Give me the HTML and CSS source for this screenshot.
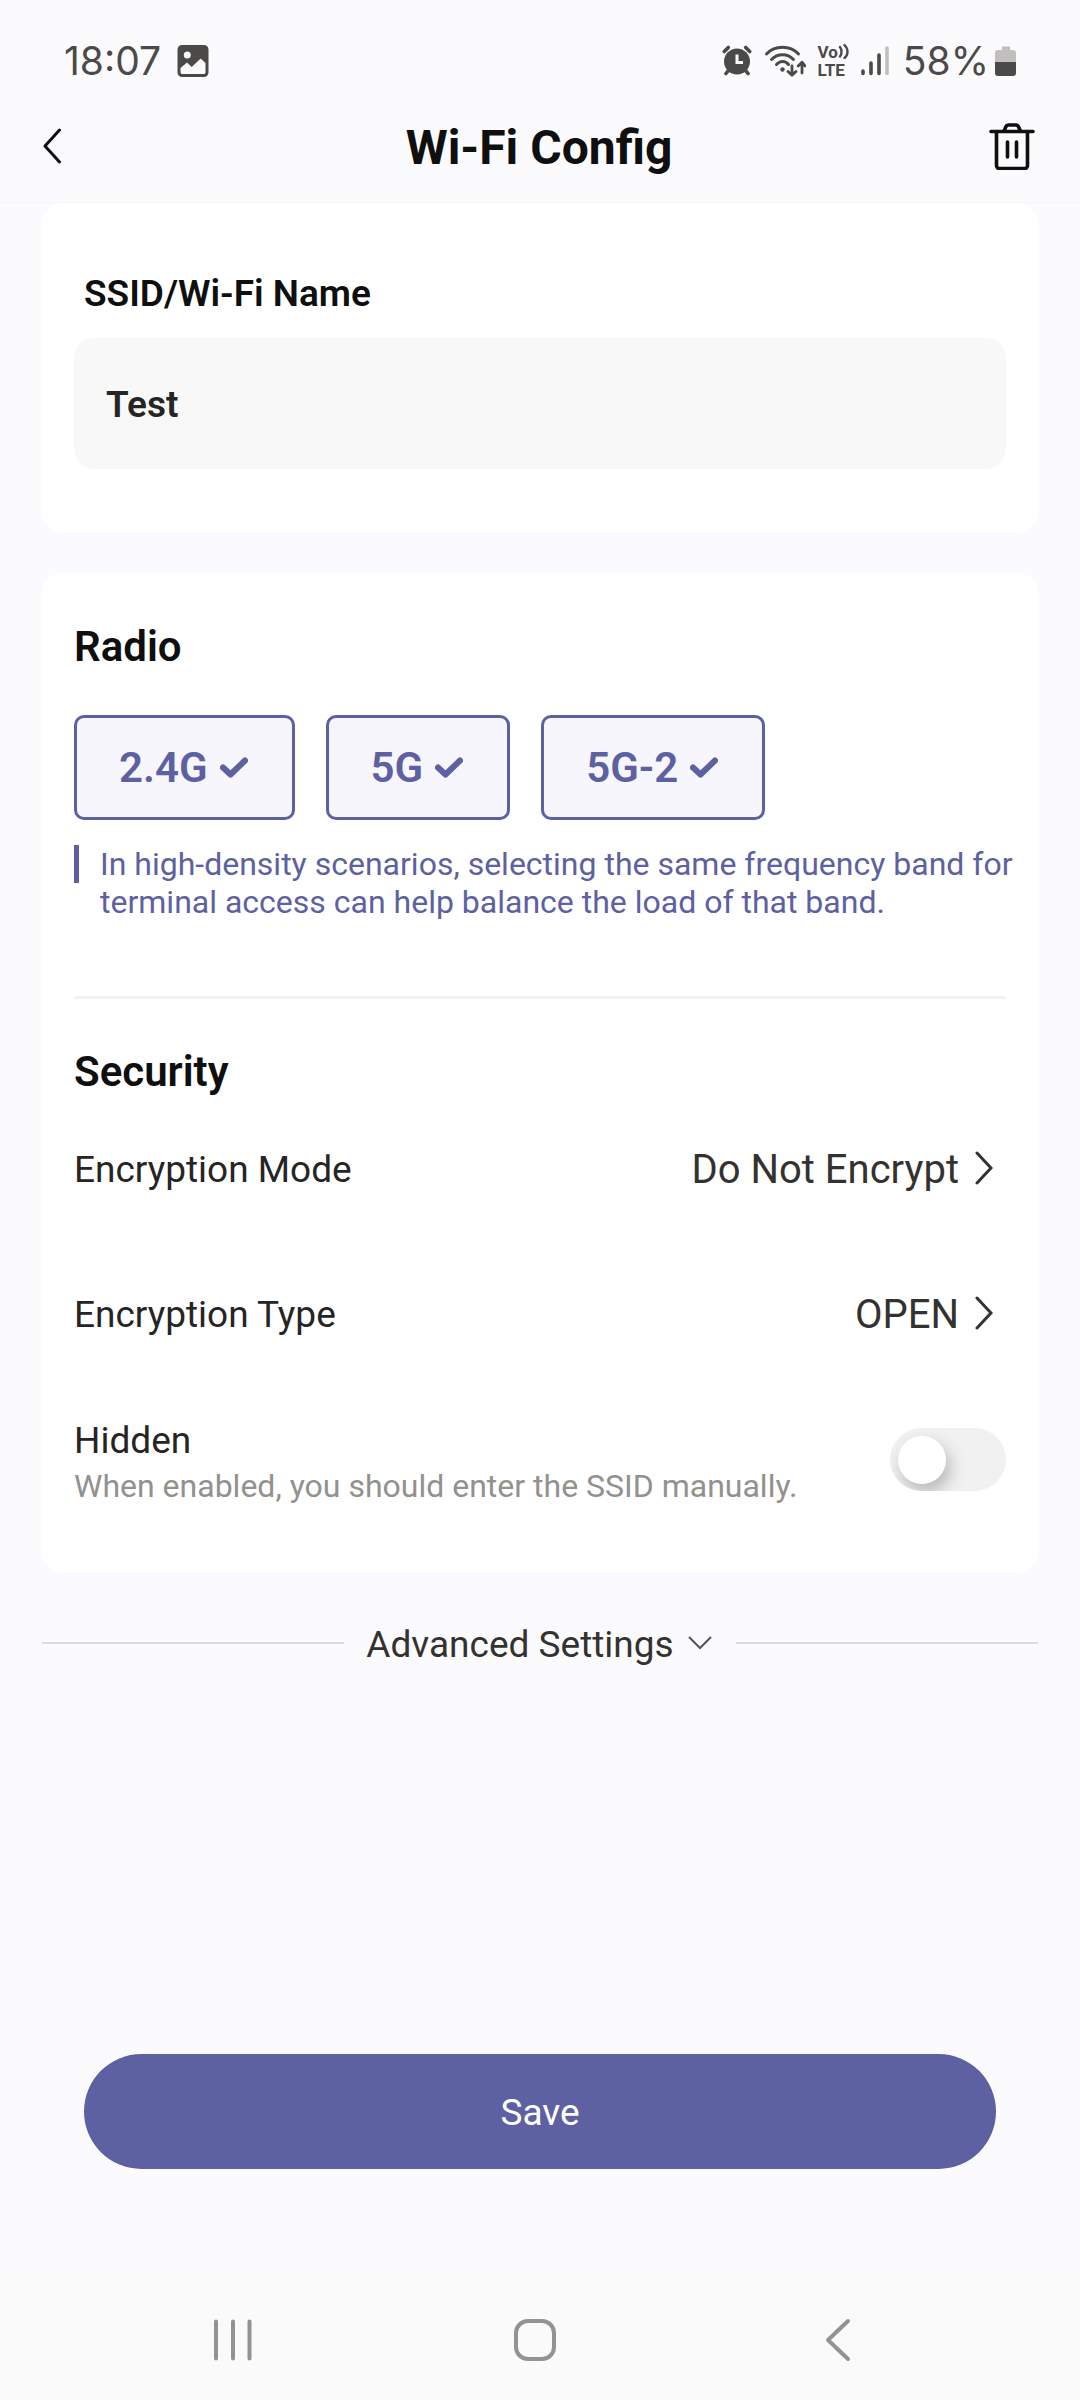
FILE: index.html
```
<!DOCTYPE html>
<html lang="en">
<head>
<meta charset="utf-8">
<meta name="viewport" content="width=device-width, initial-scale=1">
<title>Wi-Fi Config</title>
<link rel="stylesheet" href="styles.css">
</head>
<body>
<div class="screen">
  <div class="status">
    <div class="status-group">
      <span class="clock">18:07</span>
      <svg width="32" height="32" viewBox="0 0 32 32" aria-hidden="true">
        <path fill="#4b4a48" fill-rule="evenodd" d="M5 0h22a4.500 4.500 0 0 1 4.500 4.500v23a4.500 4.500 0 0 1-4.500 4.500H5A4.500 4.500 0 0 1 .5 27.500v-23A4.500 4.500 0 0 1 5 0zM10.300 6.500a3.500 3.500 0 1 0 0 7 3.500 3.500 0 0 0 0-7zM3.500 23v4c0 1.500.8 2 2 2h21c1.200 0 2-.5 2-2V18l-4.800-4.500-9 8.500-4.700-4.500z"/>
      </svg>
    </div>
    <div class="status-group status-right">
      <svg width="30" height="32" viewBox="0 0 30 32" aria-hidden="true">
        <g stroke="#4b4a48" stroke-width="3.600" stroke-linecap="round">
          <path d="M2.300 6.500l4-4M27.700 6.500l-4-4M4 28.500l4-5M26 28.500l-4-5"/>
        </g>
        <circle cx="15" cy="16.500" r="13" fill="#4b4a48"/>
        <path d="M15 9.500v8h6" fill="none" stroke="#fbfbfd" stroke-width="3"/>
      </svg>
      <svg width="42" height="34" viewBox="0 0 42 34" aria-hidden="true">
        <g fill="none" stroke="#4b4a48" stroke-width="3" stroke-linecap="round" stroke-linejoin="round">
          <path d="M2.500 10C11 1 26 1 34.500 10M7.500 15.500c6-6.500 16-6.500 22 0M12.500 20.500c3.500-4 9-4 12 0"/>
          <path stroke-width="2.800" d="M28 22v8.500M24 27.500l4 3.800 4-3.800M38 29V19M34.200 22l3.800-3.800L41 22"/>
        </g>
        <circle cx="18.500" cy="25.500" r="2.200" fill="#4b4a48"/>
      </svg>
      <div class="volte">
        <span class="volte-line">Vo<svg width="11" height="16" viewBox="0 0 11 16" aria-hidden="true"><path d="M2 4c2 2.500 2 7 0 9.500M6.500 2c4 4 4 9.500 0 13" fill="none" stroke="#4b4a48" stroke-width="2.400" stroke-linecap="round"/></svg></span>
        <span class="volte-line">LTE</span>
      </div>
      <svg width="28" height="30" viewBox="0 0 28 30" aria-hidden="true">
        <g stroke="#4b4a48" stroke-width="3.600" stroke-linecap="round">
          <path d="M2 25v2.500M10 17v10.500M18 9v18.500"/>
          <path stroke="#c1bfbe" d="M26 2v25.500"/>
        </g>
      </svg>
      <div class="battery">
        <span class="clock">58%</span>
        <svg width="21" height="32" viewBox="0 0 21 32" aria-hidden="true">
          <path fill="#c1bfbe" d="M7 1.500h8V5h3a3 3 0 0 1 3 3v10H0V8a3 3 0 0 1 3-3h4z"/>
          <path fill="#4b4a48" d="M0 17h21v11a3 3 0 0 1-3 3H3a3 3 0 0 1-3-3z"/>
        </svg>
      </div>
    </div>
  </div>

  <header class="header">
    <button class="icon-button" type="button" aria-label="Back">
      <svg width="20" height="36" viewBox="0 0 20 36"><path d="M17.500 2L3 18l14.500 16" fill="none" stroke="#0f0f0f" stroke-width="3" stroke-linecap="round" stroke-linejoin="round"/></svg>
    </button>
    <h1 class="title">Wi-Fi Config</h1>
    <button class="icon-button" type="button" aria-label="Delete">
      <svg width="46" height="48" viewBox="0 0 46 48"><g fill="none" stroke="#0f0f0f" stroke-width="3.600" stroke-linecap="round" stroke-linejoin="round"><path d="M2 9.500h42M7.500 9.500v34a3 3 0 0 0 3 3h25a3 3 0 0 0 3-3v-34M15 9l2-4.500a2.500 2.500 0 0 1 2.200-1.500h8a2.500 2.500 0 0 1 2.200 1.500l2 4.500M18.500 20v15M27.500 20v15"/></g></svg>
    </button>
  </header>

  <main class="content">
    <section class="card card-name">
      <label class="field-label" for="ssid">SSID/Wi-Fi Name</label>
      <input class="field" id="ssid" type="text" value="Test">
    </section>

    <section class="card card-settings">
      <h2 class="heading">Radio</h2>
      <div class="chips">
        <label class="chip"><input type="checkbox" checked>2.4G<svg width="28" height="22" viewBox="0 0 28 22" aria-hidden="true"><path d="M3 10.500l7.500 7L25 3.500"/></svg></label>
        <label class="chip"><input type="checkbox" checked>5G<svg width="28" height="22" viewBox="0 0 28 22" aria-hidden="true"><path d="M3 10.500l7.500 7L25 3.500"/></svg></label>
        <label class="chip"><input type="checkbox" checked>5G-2<svg width="28" height="22" viewBox="0 0 28 22" aria-hidden="true"><path d="M3 10.500l7.500 7L25 3.500"/></svg></label>
      </div>
      <div class="note">
        <span class="note-bar"></span>
        <p class="note-text">In high-density scenarios, selecting the same frequency band for terminal access can help balance the load of that band.</p>
      </div>
      <hr class="divider">
      <h2 class="heading">Security</h2>
      <div class="rows">
        <button class="row" type="button">
          <span>Encryption Mode</span>
          <span class="value">Do Not Encrypt<svg width="18" height="34" viewBox="0 0 18 34" aria-hidden="true"><path d="M2 2l14 15L2 32"/></svg></span>
        </button>
        <button class="row" type="button">
          <span>Encryption Type</span>
          <span class="value">OPEN<svg width="18" height="34" viewBox="0 0 18 34" aria-hidden="true"><path d="M2 2l14 15L2 32"/></svg></span>
        </button>
      </div>
      <div class="hidden-row">
        <label for="hidden-ssid">Hidden<small class="hint">When enabled, you should enter the SSID manually.</small></label>
        <input class="toggle" id="hidden-ssid" type="checkbox" role="switch">
      </div>
    </section>

    <button class="advanced" type="button">
      <span class="advanced-text">Advanced Settings</span>
      <svg width="24" height="14" viewBox="0 0 24 14" aria-hidden="true"><path d="M1 1l11 11L23 1" fill="none" stroke="#555" stroke-width="2"/></svg>
    </button>
  </main>

  <footer class="actions">
    <button class="save" type="button">Save</button>
  </footer>

  <nav class="navbar">
    <button class="icon-button" type="button" aria-label="Recent apps">
      <svg width="44" height="44" viewBox="0 0 44 44"><path d="M6 3.500v37M23 3.500v37M39.500 3.500v37"/></svg>
    </button>
    <button class="icon-button" type="button" aria-label="Home">
      <svg width="44" height="44" viewBox="0 0 44 44"><rect x="3" y="3" width="38" height="38" rx="12"/></svg>
    </button>
    <button class="icon-button" type="button" aria-label="Back">
      <svg width="44" height="44" viewBox="0 0 44 44"><path d="M32 3L12 22l20 19"/></svg>
    </button>
  </nav>
</div>
</body>
</html>
```
FILE: styles.css
```
* {
  box-sizing: border-box;
}

body {
  margin: 0;
  background: #fbfbfd;
  color: #262524;
  font-family: Roboto, "Liberation Sans", sans-serif;
  font-size: 37px;
  line-height: 44px;
}

button {
  padding: 0;
  border: 0;
  background: none;
  color: inherit;
  font: inherit;
  cursor: pointer;
}

svg {
  display: block;
  flex: none;
}

.screen {
  display: flex;
  flex-direction: column;
  min-height: 100vh;
}

/* System status bar */

.status {
  display: flex;
  justify-content: space-between;
  align-items: center;
  height: 98px;
  padding: 24px 64px 0;
  color: #4b4a48;
}

.status-group,
.battery {
  display: flex;
  align-items: center;
}

.status-group {
  gap: 16px;
}

.status-right {
  gap: 12px;
}

.battery {
  gap: 6px;
  margin-left: 2px;
}

.clock {
  font-family: Inter, Roboto, sans-serif;
  font-size: 39px;
  font-weight: 400;
}

.volte {
  font-size: 17px;
  font-weight: 700;
  line-height: 18px;
}

.volte-line {
  display: flex;
}

/* App header */

.header {
  display: flex;
  justify-content: space-between;
  align-items: center;
  height: 105px;
  padding: 0 44px 8px 42px;
  border-bottom: 1px solid #f5f5f7;
}

.icon-button {
  display: flex;
  align-items: center;
  justify-content: center;
}

.title {
  margin: 0;
  padding-top: 4px;
  color: #0f0f0f;
  font-size: 48px;
  font-weight: 700;
  line-height: 56px;
}

.header .icon-button {
  width: 48px;
}

.header .icon-button:first-child {
  justify-content: flex-start;
}

/* Cards */

.content {
  flex: 1;
  padding: 0 42px;
}

.card {
  padding: 49px 32px 63px;
  border-radius: 20px;
  background: #fff;
}

.card-name {
  padding-top: 69px;
}

.card-settings {
  margin-top: 41px;
}

.field-label {
  display: block;
  padding: 0 10px;
  color: #0f0f0f;
  font-weight: 600;
}

.field {
  display: block;
  width: 100%;
  height: 131px;
  margin-top: 22px;
  padding: 2px 32px 0;
  border: 0;
  border-radius: 20px;
  background: #f8f8f8;
  color: inherit;
  font: inherit;
  font-weight: 600;
}

.heading {
  margin: 0;
  color: #0f0f0f;
  font-size: 42px;
  font-weight: 600;
  line-height: 50px;
}

.chips {
  display: flex;
  gap: 31px;
  margin-top: 43px;
}

.chip {
  display: flex;
  align-items: center;
  gap: 12px;
  height: 105px;
  padding: 0 44px 0 42px;
  border: 3px solid #5d61a2;
  border-radius: 10px;
  background: #f6f6fc;
  color: #5d61a2;
  font-size: 42px;
  font-weight: 600;
  position: relative;
}

.chip input {
  position: absolute;
  inset: 0;
  margin: 0;
  opacity: 0;
}

.chip path {
  fill: none;
  stroke: currentColor;
  stroke-width: 6;
  stroke-linecap: round;
  stroke-linejoin: round;
}

.note {
  display: flex;
  gap: 21px;
  margin: 25px -16px 0 0;
  color: #5d61a2;
  font-size: 32px;
  line-height: 38px;
}

.note-bar {
  flex: none;
  width: 5px;
  height: 38px;
  background: #5d61a2;
}

.note-text {
  margin: 0;
}

.divider {
  height: 3px;
  margin: 75px 0 48px;
  border: 0;
  background: #f2f2f2;
}

.row,
.hidden-row {
  display: flex;
  justify-content: space-between;
  align-items: center;
  width: 100%;
  text-align: left;
}

.row {
  height: 145px;
}

.value {
  display: flex;
  align-items: center;
  gap: 16px;
  padding-right: 13px;
  color: #333231;
  font-size: 40px;
}

.value svg {
  margin-bottom: 4px;
}

.value path {
  fill: none;
  stroke: #333231;
  stroke-width: 3;
  stroke-linecap: round;
}

.hidden-row {
  align-items: flex-start;
  margin-top: 32px;
}

.hint {
  display: block;
  color: #92918e;
  font-size: 32px;
  line-height: 46px;
}

.toggle {
  display: flex;
  align-items: center;
  width: 116px;
  height: 63px;
  margin: 9px 0 0;
  padding: 0 8px;
  border-radius: 32px;
  background: #f1f1f1;
  appearance: none;
  overflow: hidden;
}

.toggle::before {
  content: "";
  width: 48px;
  height: 48px;
  border-radius: 50%;
  background: #fff;
  box-shadow: 4px 8px 16px rgba(60, 50, 40, 0.3);
}

.toggle:checked {
  justify-content: flex-end;
  background: #5d61a2;
}

/* Expander and primary action */

.advanced {
  display: flex;
  align-items: center;
  width: 100%;
  margin-top: 49px;
  gap: 14px;
  color: #333231;
}

.advanced::before,
.advanced::after {
  content: "";
  flex: 1;
  height: 2px;
  background: #dedddd;
}

.advanced::before {
  margin-right: 8px;
}

.advanced::after {
  margin-left: 10px;
}

.advanced-text {
  padding-top: 4px;
  line-height: 40px;
}

.actions {
  padding: 0 84px 105px;
}

.save {
  display: block;
  width: 100%;
  height: 115px;
  padding-top: 2px;
  border-radius: 58px;
  background: #5d61a2;
  color: #fff;
}

/* System navigation */

.navbar {
  display: flex;
  justify-content: space-around;
  align-items: center;
  height: 126px;
  padding: 6px 91px 0 81px;
  background: #fafafa;
}

.navbar path,
.navbar rect {
  fill: none;
  stroke: #95938f;
  stroke-width: 4;
  stroke-linecap: round;
  stroke-linejoin: round;
}
```
